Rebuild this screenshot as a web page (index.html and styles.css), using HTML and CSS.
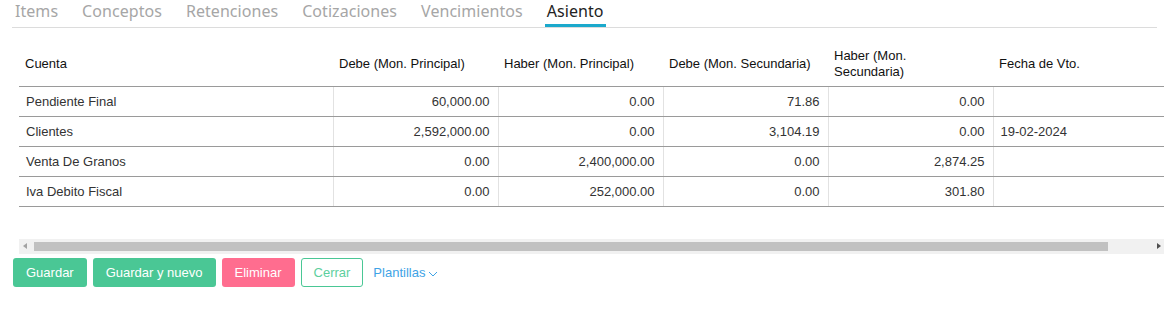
FILE: index.html
```html
<!DOCTYPE html>
<html lang="es">
<head>
  <meta charset="UTF-8">
  <title>Asiento</title>
  <link rel="stylesheet" href="styles.css">
</head>
<body>
  <nav class="tabs">
    <a class="tab">Items</a>
    <a class="tab">Conceptos</a>
    <a class="tab">Retenciones</a>
    <a class="tab">Cotizaciones</a>
    <a class="tab">Vencimientos</a>
    <a class="tab activo">Asiento</a>
  </nav>

  <div class="tabla-wrap">
    <div class="tabla-scroll">
      <table class="asiento">
        <colgroup>
          <col class="c-cuenta">
          <col class="c-num">
          <col class="c-num">
          <col class="c-num">
          <col class="c-num">
          <col class="c-fecha">
        </colgroup>
        <thead>
          <tr>
            <th>Cuenta</th>
            <th>Debe (Mon. Principal)</th>
            <th>Haber (Mon. Principal)</th>
            <th>Debe (Mon. Secundaria)</th>
            <th>Haber (Mon.<br>Secundaria)</th>
            <th>Fecha de Vto.</th>
          </tr>
        </thead>
        <tbody>
          <tr>
            <td>Pendiente Final</td>
            <td class="num">60,000.00</td>
            <td class="num">0.00</td>
            <td class="num">71.86</td>
            <td class="num">0.00</td>
            <td></td>
          </tr>
          <tr>
            <td>Clientes</td>
            <td class="num">2,592,000.00</td>
            <td class="num">0.00</td>
            <td class="num">3,104.19</td>
            <td class="num">0.00</td>
            <td>19-02-2024</td>
          </tr>
          <tr>
            <td>Venta De Granos</td>
            <td class="num">0.00</td>
            <td class="num">2,400,000.00</td>
            <td class="num">0.00</td>
            <td class="num">2,874.25</td>
            <td></td>
          </tr>
          <tr>
            <td>Iva Debito Fiscal</td>
            <td class="num">0.00</td>
            <td class="num">252,000.00</td>
            <td class="num">0.00</td>
            <td class="num">301.80</td>
            <td></td>
          </tr>
        </tbody>
      </table>
    </div>

    <div class="barra">
      <span class="flecha izq"></span>
      <div class="pista"><div class="pulgar"></div></div>
      <span class="flecha der"></span>
    </div>
  </div>

  <div class="acciones">
    <button class="btn verde">Guardar</button>
    <button class="btn verde">Guardar y nuevo</button>
    <button class="btn rosa">Eliminar</button>
    <button class="btn borde">Cerrar</button>
    <a class="plantillas">Plantillas
      <svg width="10" height="6" viewBox="0 0 10 6"><path d="M1 1l4 4 4-4" fill="none" stroke="currentColor" stroke-width="1"/></svg>
    </a>
  </div>
</body>
</html>
```

FILE: styles.css
```css
* {
  box-sizing: border-box;
}
body {
  margin: 0;
  font-family: "Liberation Sans", Arial, sans-serif;
  font-size: 13px;
  color: #333;
  background: #fff;
}
.tabs {
  display: flex;
  gap: 20px;
  margin: 0 15px 0 12px;
  padding-left: 1px;
  height: 28px;
  border-bottom: 1px solid #dcdcdc;
}
.tab {
  font-family: "Noto Sans", sans-serif;
  font-size: 16px;
  letter-spacing: 0.05px;
  color: #a6a6a6;
  padding: 1px 2px 0;
  line-height: 21px;
  border-bottom: 3px solid transparent;
}
.tab.activo {
  color: #222;
  border-bottom-color: #1ba9cc;
}
.tabla-wrap {
  margin: 15px 8px 0 19px;
}
.tabla-scroll {
  overflow: hidden;
  height: 196px;
}
.asiento {
  width: 1190px;
  table-layout: fixed;
  border-collapse: collapse;
}
.c-cuenta { width: 314px; }
.c-num { width: 165px; }
.c-fecha { width: 216px; }
.asiento th {
  height: 43px;
  text-align: left;
  font-weight: normal;
  color: #111;
  padding: 0 6px;
  line-height: 16px;
  border-bottom: 1px solid #9a9a9a;
}
.asiento td {
  height: 30px;
  padding: 0 7px;
  border-bottom: 1px solid #9a9a9a;
  border-left: 1px solid #e2e2e2;
}
.asiento td:first-child {
  border-left: none;
}
.asiento td.num {
  text-align: right;
  padding-right: 8px;
}
.barra {
  display: flex;
  align-items: center;
  height: 15px;
  background: #f1f1f1;
}
.pista {
  flex: 1;
  height: 9px;
  margin: 0 4px;
}
.pulgar {
  width: 1074px;
  height: 100%;
  background: #c1c1c1;
}
.flecha {
  width: 11px;
  height: 15px;
  position: relative;
}
.flecha::after {
  content: "";
  position: absolute;
  top: 4px;
  border-top: 3.5px solid transparent;
  border-bottom: 3.5px solid transparent;
}
.flecha.izq::after {
  left: 4px;
  border-right: 4px solid #a3a3a3;
}
.flecha.der::after {
  left: 4px;
  border-left: 4px solid #505050;
}
.acciones {
  display: flex;
  align-items: center;
  gap: 6px;
  margin: 4px 0 0 13px;
}
.btn {
  height: 29px;
  padding: 0 12px;
  border: 1px solid transparent;
  border-radius: 3px;
  font-family: "Liberation Sans", Arial, sans-serif;
  font-size: 13px;
  color: #fff;
}
.verde {
  background: #4ac795;
}
.rosa {
  background: #ff6d8f;
}
.borde {
  background: #fff;
  border-color: #4ac795;
  color: #5dcf9e;
}
.plantillas {
  margin-left: 4px;
  color: #3ea3e6;
  display: flex;
  align-items: center;
  gap: 3px;
}
.plantillas svg {
  margin-top: 2px;
}
```
